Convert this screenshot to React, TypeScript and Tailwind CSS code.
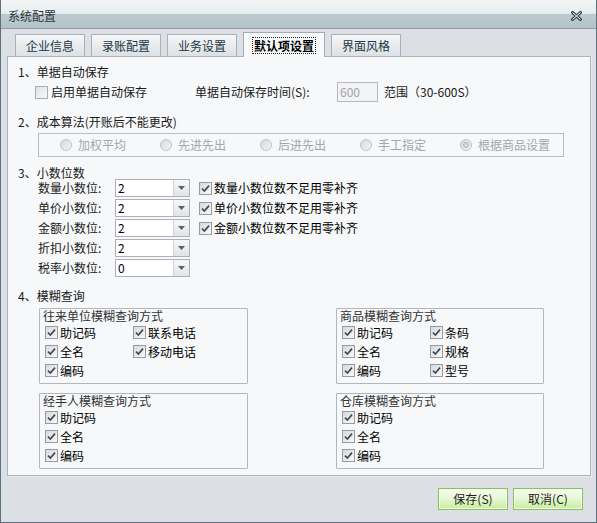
import React from "react";

function Check({ checked = true, disabled = false }: { checked?: boolean; disabled?: boolean }) {
  return (
    <span
      className={`flex h-[13px] w-[13px] shrink-0 items-center justify-center border ${
        disabled ? "border-[#a9aeb3] bg-[linear-gradient(135deg,#dfe2e5,#f6f7f8)]" : "border-[#969ca1] bg-[linear-gradient(135deg,#d6dadd,#f7f8f9)]"
      }`}
    >
      {checked && (
        <svg width="9" height="9" viewBox="0 0 9 9">
          <path d="M1 4.6 L3.4 7 L8 1.6" fill="none" stroke="#474b4f" strokeWidth="1.7" />
        </svg>
      )}
    </span>
  );
}

function Radio({ selected = false }: { selected?: boolean }) {
  return (
    <span className="mr-[6px] flex h-[12px] w-[12px] shrink-0 items-center justify-center rounded-full border border-[#c0c4c8] bg-[linear-gradient(135deg,#d5d8db,#f3f4f5)]">
      {selected && <span className="h-[6px] w-[6px] rounded-full border border-[#b3b7bb] bg-[#d3d6d9]" />}
    </span>
  );
}

function Combo({ value }: { value: string }) {
  return (
    <div className="flex h-[18px] w-[75px] shrink-0 border border-[#abb1b7] bg-white">
      <span className="flex-1 pl-[2px] leading-[16px] text-black">{value}</span>
      <span className="flex w-[16px] items-center justify-center border-l border-[#d0d4d8] bg-[linear-gradient(#f6f7f8,#e1e4e7)]">
        <svg width="7" height="4" viewBox="0 0 7 4">
          <path d="M0 0h7L3.5 4z" fill="#5a5f64" />
        </svg>
      </span>
    </div>
  );
}

function CheckItem({ label }: { label: string }) {
  return (
    <div className="flex h-[19px] items-center">
      <Check />
      <span className="ml-[2px] text-black">{label}</span>
    </div>
  );
}

function QueryBox({ title, cols, width }: { title: string; cols: string[][]; width: string }) {
  return (
    <div className={`h-[76px] ${width} rounded-[1px] border border-[#b1b7bc] pl-[5px]`}>
      <div className="ml-[-2px] leading-[14px] text-[#333]">{title}</div>
      <div className="flex">
        {cols.map((col, i) => (
          <div key={i} className="flex w-[88px] flex-col">
            {col.map((l) => (
              <CheckItem key={l} label={l} />
            ))}
          </div>
        ))}
      </div>
    </div>
  );
}

const tabs = ["企业信息", "录账配置", "业务设置", "默认项设置", "界面风格"];
const decimals = [
  { label: "数量小数位:", value: "2", check: "数量小数位数不足用零补齐" },
  { label: "单价小数位:", value: "2", check: "单价小数位数不足用零补齐" },
  { label: "金额小数位:", value: "2", check: "金额小数位数不足用零补齐" },
  { label: "折扣小数位:", value: "2" },
  { label: "税率小数位:", value: "0" },
];
const methods = ["加权平均", "先进先出", "后进先出", "手工指定", "根据商品设置"];

export default function App() {
  return (
    <div className="flex h-[523px] w-[597px] flex-col border-x border-b border-[#5c717b] bg-[#dcdfe3] font-['Noto_Sans_CJK_SC','Noto_Sans',sans-serif] text-[12px] leading-[16px] text-[#1a1a1a]">
      {/* title bar */}
      <div className="flex h-[29px] shrink-0 items-center justify-between border-b border-[#8d9ea5] bg-[linear-gradient(to_bottom,#f3f6f7_0%,#e8edef_48%,#bccbcf_50%,#b2c3c7_100%)] pl-[7px] pr-[14px]">
        <span className="mt-[3px] text-[#2b363b]">系统配置</span>
        <svg width="11" height="10" viewBox="0 0 11 10" className="mt-[3px]">
          <path d="M1.5 1.5 L9.5 8.5 M9.5 1.5 L1.5 8.5" stroke="#3e4a50" strokeWidth="3" strokeLinecap="square" />
          <path d="M1.5 1.5 L9.5 8.5 M9.5 1.5 L1.5 8.5" stroke="#f4f6f7" strokeWidth="1" />
        </svg>
      </div>

      <div className="ml-[6px] mt-[3px] w-[584px]">
        {/* tabs */}
        <div className="flex h-[24px] items-end gap-[6px] pl-[8px]">
          {tabs.map((t) =>
            t === "默认项设置" ? (
              <div
                key={t}
                className="relative z-10 mb-[-1px] flex h-[25px] w-[82px] items-center justify-center border-x border-t border-[#a3adb3] bg-[#f8f9fa] font-bold text-black"
              >
                <span className="border border-dotted border-[#222] px-[1px] leading-[15px]">{t}</span>
              </div>
            ) : (
              <div
                key={t}
                className="flex h-[22px] w-[70px] items-center justify-center border-x border-t border-[#a8b2b8] bg-[linear-gradient(#f5f6f7,#dde1e4)] text-[#213645]"
              >
                {t}
              </div>
            )
          )}
        </div>

        {/* panel */}
        <div className="h-[420px] border border-[#aab4ba] bg-[#f7f8f9] shadow-[1px_1px_0_#e9ecee]">
          <div className="mt-[7px] pl-[10px]">1、单据自动保存</div>
          <div className="mt-[2px] flex h-[20px] items-center">
            <div className="ml-[27px] flex w-[160px] items-center">
              <Check checked={false} disabled />
              <span className="ml-[3px]">启用单据自动保存</span>
            </div>
            <span className="w-[142px]">单据自动保存时间(S):</span>
            <div className="h-[20px] w-[41px] border border-[#b6babe] bg-[#f2f3f4] pl-[2px] leading-[18px] text-[#a2a5a8]">600</div>
            <span className="ml-[6px]">范围（30-600S）</span>
          </div>

          <div className="mt-[12px] pl-[10px]">2、成本算法(开账后不能更改)</div>
          <div className="ml-[30px] mt-[3px] flex h-[24px] w-[526px] items-center border border-[#b8bfc4] pl-[21px] text-[#a3a7ab]">
            {methods.map((m, i) => (
              <div key={m} className="flex w-[100px] items-center">
                <Radio selected={i === 4} />
                <span>{m}</span>
              </div>
            ))}
          </div>

          <div className="mt-[8px] pl-[10px]">3、小数位数</div>
          <div className="ml-[30px] mt-[-3px] flex flex-col">
            {decimals.map((d) => (
              <div key={d.label} className="flex h-[20px] items-center">
                <span className="w-[77px]">{d.label}</span>
                <Combo value={d.value} />
                {d.check && (
                  <div className="ml-[9px] flex items-center">
                    <Check />
                    <span className="ml-[2px] text-black">{d.check}</span>
                  </div>
                )}
              </div>
            ))}
          </div>

          <div className="mt-[10px] pl-[10px]">4、模糊查询</div>
          <div className="ml-[31px] mt-[4px] flex gap-[88px]">
            <QueryBox width="w-[209px]" title="往来单位模糊查询方式" cols={[["助记码", "全名", "编码"], ["联系电话", "移动电话"]]} />
            <QueryBox width="w-[208px]" title="商品模糊查询方式" cols={[["助记码", "全名", "编码"], ["条码", "规格", "型号"]]} />
          </div>
          <div className="ml-[31px] mt-[9px] flex gap-[88px]">
            <QueryBox width="w-[209px]" title="经手人模糊查询方式" cols={[["助记码", "全名", "编码"]]} />
            <QueryBox width="w-[208px]" title="仓库模糊查询方式" cols={[["助记码", "全名", "编码"]]} />
          </div>
        </div>
      </div>

      {/* buttons */}
      <div className="mt-[12px] flex justify-end gap-[5px] pr-[13px]">
        {["保存(S)", "取消(C)"].map((b) => (
          <button
            key={b}
            className="flex h-[22px] w-[70px] items-center justify-center border border-[#84c656] bg-[linear-gradient(#f8fcf3,#e6f7d3_50%,#c8ec9f)] text-[#1c1c1c] shadow-[inset_0_0_0_1px_#f2fbe8]"
          >
            {b}
          </button>
        ))}
      </div>
    </div>
  );
}
